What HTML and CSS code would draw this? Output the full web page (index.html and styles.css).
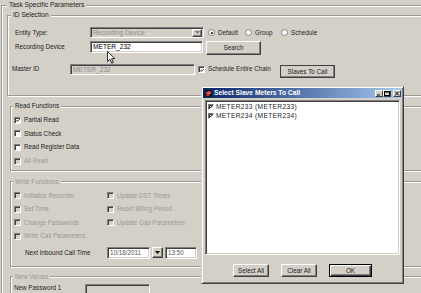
FILE: index.html
```html
<!DOCTYPE html>
<html>
<head>
<meta charset="utf-8">
<link rel="stylesheet" href="styles.css">
</head>
<body>
<div class="screen">
  <fieldset class="group outer">
    <legend class="lg-outer">Task Specific Parameters</legend>

    <fieldset class="group idsel">
      <legend class="lg-id">ID Selection</legend>
      <div class="idbody">
        <div class="row r1">
          <span class="lbl w75">Entity Type:</span>
          <div class="combo dis">
            <span class="combo-text">Recording Device</span>
            <span class="dropbtn"><svg width="5" height="3" viewBox="0 0 5 3"><path d="M0 0h5L2.5 3z" fill="#808080"/></svg></span>
          </div>
          <div class="radios">
            <span class="radio on w37"><i></i>Default</span>
            <span class="radio w36"><i></i>Group</span>
            <span class="radio"><i></i>Schedule</span>
          </div>
        </div>
        <div class="row r2">
          <span class="lbl w75 pt">Recording Device</span>
          <div class="input rd">METER_232</div>
          <button class="btn search">Search</button>
        </div>
        <div class="row r3">
          <span class="lbl w58 pt2">Master ID</span>
          <div class="input master dis">METER_232</div>
          <span class="cb on cb-chain"><svg width="5" height="5" viewBox="0 0 5 5"><path d="M0.5 2.2L1.8 3.6L4.5 0.8" fill="none" stroke="#000" stroke-width="1.1"/></svg></span>
          <span class="chain-text">Schedule Entire Chain</span>
          <button class="btn slaves">Slaves To Call</button>
        </div>
      </div>
    </fieldset>

    <fieldset class="group readf">
      <legend class="lg-small">Read Functions</legend>
      <div class="readbody">
        <div class="chk"><span class="cb on"><svg width="5" height="5" viewBox="0 0 5 5"><path d="M0.5 2.2L1.8 3.6L4.5 0.8" fill="none" stroke="#000" stroke-width="1.1"/></svg></span>Partial Read</div>
        <div class="chk"><span class="cb"></span>Status Check</div>
        <div class="chk"><span class="cb"></span>Read Register Data</div>
        <div class="chk dtext"><span class="cb dis"></span>All Read</div>
      </div>
    </fieldset>

    <fieldset class="group writef">
      <legend class="lg-small dtext">Write Functions</legend>
      <div class="writebody">
        <div class="wgrid">
          <div class="chk2 dtext"><span class="cb dis"></span>Initialize Recorder</div>
          <div class="chk2 dtext"><span class="cb dis"></span>Update DST Times</div>
          <div class="chk2 dtext"><span class="cb dis"></span>Set Time</div>
          <div class="chk2 dtext"><span class="cb dis"></span>Reset Billing Period</div>
          <div class="chk2 dtext"><span class="cb dis"></span>Change Passwords</div>
          <div class="chk2 dtext"><span class="cb dis"></span>Update Gas Parameters</div>
          <div class="chk2 dtext"><span class="cb dis"></span>Write Call Parameters</div>
        </div>
        <div class="row nextrow">
          <span class="lbl nextlbl">Next Inbound Call Time</span>
          <div class="input date">10/18/2011</div>
          <span class="dropbtn2"><svg width="5" height="3" viewBox="0 0 5 3"><path d="M0 0h5L2.5 3z" fill="#000"/></svg></span>
          <div class="input time">13:50</div>
        </div>
      </div>
    </fieldset>

    <fieldset class="group newv">
      <legend class="lg-small dtext">New Values</legend>
      <div class="newbody">
        <div class="row">
          <span class="lbl w71">New Password 1</span>
          <div class="input pw"></div>
        </div>
      </div>
    </fieldset>
  </fieldset>

  <div class="dialog">
    <div class="titlebar">
      <svg class="ticon" width="7" height="7" viewBox="0 0 7 7"><rect width="7" height="7" fill="#1a1a1a"/><path d="M1 6L3 1h3L4 6z" fill="#e0201c"/><path d="M1 3h5" stroke="#fff" stroke-width="0.6"/></svg>
      <span class="ttext">Select Slave Meters To Call</span>
      <span class="tbtns">
        <span class="tb"><svg width="6" height="5" viewBox="0 0 6 5"><path d="M1 4h3" stroke="#000" stroke-width="1"/></svg></span>
        <span class="tb"><svg width="6" height="5" viewBox="0 0 6 5"><rect x="0.5" y="0.5" width="5" height="4" fill="none" stroke="#000"/><path d="M0.5 1h5" stroke="#000"/></svg></span>
        <span class="tb close"><svg width="6" height="5" viewBox="0 0 6 5"><path d="M1 0.5l4 4M5 0.5l-4 4" stroke="#000" stroke-width="1"/></svg></span>
      </span>
    </div>
    <div class="list">
      <div class="item"><span class="cb small on"><svg width="4" height="4" viewBox="0 0 5 5"><path d="M0.5 2.2L1.8 3.6L4.5 0.8" fill="none" stroke="#000" stroke-width="1.2"/></svg></span>METER233 (METER233)</div>
      <div class="item"><span class="cb small on"><svg width="4" height="4" viewBox="0 0 5 5"><path d="M0.5 2.2L1.8 3.6L4.5 0.8" fill="none" stroke="#000" stroke-width="1.2"/></svg></span>METER234 (METER234)</div>
    </div>
    <div class="dbtns">
      <button class="btn dbtn">Select All</button>
      <button class="btn dbtn">Clear All</button>
      <button class="btn dbtn ok">OK</button>
    </div>
  </div>

  <svg class="cursor" width="9" height="13" viewBox="0 0 9 13"><path d="M0.5 0.5V10.5L3 8.2L4.8 12.2L6.3 11.5L4.6 7.6H7.8Z" fill="#fff" stroke="#000" stroke-width="0.8" stroke-linejoin="round"/></svg>
</div>
</body>
</html>
```

FILE: styles.css
```css
* { box-sizing: border-box; }
html, body { margin: 0; padding: 0; }
body {
  background: #d4d0c8;
  font-family: "Liberation Sans", Arial, sans-serif;
  font-size: 6.3px;
  line-height: 8px;
  color: #1c1c1c;
}
.screen {
  position: relative;
  width: 421px;
  height: 293px;
  overflow: hidden;
}

/* group boxes */
.group {
  border: 1px solid #9d9a93;
  box-shadow: inset 1px 1px 0 #fff, 1px 1px 0 #fff;
  padding: 0;
  margin: 0;
  min-width: 0;
}
.group > legend {
  padding: 0 2px;
  background: #d4d0c8;
  line-height: 8px;
}
.outer { margin: 1px 0 0 1px; width: 700px; height: 420px; }
.lg-outer { margin-left: 5px; font-size: 6.7px; }

.idsel { margin: 2px 0 0 5px; width: 680px; }
.lg-id { margin-left: 3px; font-size: 6.6px; }
.idbody { padding: 8px 0 18px 7px; }

.row { display: flex; align-items: flex-start; }
.r1 { height: 11px; align-items: center; }
.r2 { height: 14px; margin-top: 3px; }
.r3 { height: 13px; margin-top: 9px; margin-left: -3px; }

.lbl { flex: none; white-space: nowrap; }
.w75 { width: 75px; }
.w58 { width: 58px; }
.w71 { width: 71px; }
.pt { padding-top: 2px; }
.pt2 { padding-top: 1px; }

.input, .combo {
  flex: none;
  background: #fff;
  border: 1px solid;
  border-color: #808080 #fff #fff #808080;
  box-shadow: inset 1px 1px 0 #404040, inset -1px -1px 0 #d4d0c8;
  padding: 0 2px;
  white-space: nowrap;
  overflow: hidden;
  font-size: 6.6px;
}
.dis { background: #d4d0c8; color: #8f8d88; }
.combo {
  width: 114px;
  height: 11px;
  display: flex;
  align-items: center;
  justify-content: space-between;
  padding: 0 1px 0 2px;
  line-height: 8px;
}
.dropbtn, .dropbtn2 {
  flex: none;
  width: 10px;
  height: 8px;
  background: #d4d0c8;
  border: 1px solid;
  border-color: #fff #404040 #404040 #fff;
  box-shadow: inset -1px -1px 0 #808080;
  display: flex;
  align-items: center;
  justify-content: center;
}
.radios { display: flex; margin-left: 4px; align-items: center; }
.radio { display: flex; align-items: center; white-space: nowrap; }
.radio i {
  width: 7px; height: 7px; border-radius: 50%;
  background: #fff;
  border: 1px solid #808080;
  margin-right: 3px;
  flex: none;
  position: relative;
}
.radio.on i::after {
  content: "";
  position: absolute;
  left: 1.5px; top: 1.5px;
  width: 2px; height: 2px;
  border-radius: 50%;
  background: #000;
}
.w37 { width: 37px; }
.w36 { width: 36px; }

.input.rd { width: 113px; height: 12px; line-height: 10px; padding-left: 2px; color: #000; }
.btn {
  font-family: "Liberation Sans", Arial, sans-serif;
  font-size: 6.3px;
  line-height: 8px;
  color: #1c1c1c;
  background: #d4d0c8;
  border: 1px solid;
  border-color: #fff #404040 #404040 #fff;
  box-shadow: inset -1px -1px 0 #808080;
  padding: 0;
  margin: 0;
  flex: none;
}
.search { width: 55px; height: 14px; margin-left: 3px; }
.input.master { width: 125px; height: 11px; line-height: 9px; }
.cb {
  flex: none;
  width: 7px; height: 7px;
  background: #fff;
  border: 1px solid;
  border-color: #808080 #fff #fff #808080;
  box-shadow: inset 1px 1px 0 #404040;
  display: inline-flex;
  align-items: center;
  justify-content: center;
}
.cb svg { display: block; margin: 1px 0 0 1px; }
.cb.dis { background: #d4d0c8; }
.cb-chain { margin: 2px 0 0 3px; }
.chain-text { margin: 1px 0 0 3px; width: 72px; white-space: nowrap; }
.slaves { width: 55px; height: 13px; margin-top: 1px; border-color: #404040; }

/* read functions */
.readf { margin: 6px 0 0 8px; width: 660px; }
.lg-small { margin-left: 2px; }
.readbody { padding: 3.5px 0 2px 3px; }
.chk { height: 13.6px; display: flex; align-items: center; white-space: nowrap; }
.chk .cb { margin-right: 3px; }
.dtext { color: #9a9893; }

/* write functions */
.writef { margin: 7px 0 0 8px; width: 660px; }
.writebody { padding: 3.25px 0 7px 3px; }
.wgrid { display: grid; grid-template-columns: 93px 100px; grid-auto-rows: 13.5px; }
.chk2 { display: flex; align-items: center; white-space: nowrap; }
.chk2 .cb { margin-right: 3px; }
.nextrow { height: 12px; margin-top: 3.75px; align-items: center; }
.nextlbl { margin-left: 11px; width: 82px; }
.input.date { width: 43px; height: 12px; line-height: 10px; color: #555; font-size: 6.3px; }
.dropbtn2 { width: 11px; height: 11px; margin-left: 2px; }
.input.time { width: 32px; height: 12px; line-height: 10px; margin-left: 2px; color: #555; font-size: 6.3px; }

/* new values */
.newv { margin: 6px 0 0 8px; width: 660px; height: 60px; }
.newbody { padding: 3px 0 0 3px; }
.input.pw { width: 65px; height: 14px; background: #d4d0c8; }

/* dialog */
.dialog {
  position: absolute;
  left: 201px;
  top: 86px;
  width: 203px;
  height: 198px;
  background: #d4d0c8;
  border: 1px solid;
  border-color: #d4d0c8 #404040 #404040 #d4d0c8;
  box-shadow: inset 1px 1px 0 #fff, inset -1px -1px 0 #808080;
  padding: 1px;
  display: flex;
  flex-direction: column;
}
.titlebar {
  height: 10px;
  background: linear-gradient(to right, #0a246a, #a6caf0);
  display: flex;
  align-items: center;
  padding-left: 2px;
  flex: none;
}
.ticon { flex: none; display: block; }
.ttext {
  margin-left: 2px;
  color: #fff;
  font-weight: bold;
  font-size: 6.7px;
  white-space: nowrap;
  flex: 1;
}
.tbtns { display: flex; margin-right: 1px; }
.tb {
  width: 8px; height: 7px;
  background: #d4d0c8;
  border: 1px solid;
  border-color: #fff #404040 #404040 #fff;
  display: flex; align-items: center; justify-content: center;
}
.tb svg { display: block; }
.tb.close { margin-left: 2px; }
.list {
  margin: 2px 2px 0 2px;
  height: 155px;
  background: #fff;
  border: 1px solid;
  border-color: #808080 #fff #fff #808080;
  box-shadow: inset 1px 1px 0 #404040, inset -1px -1px 0 #d4d0c8;
  padding: 1px 0 0 2px;
  flex: none;
}
.item { height: 9px; display: flex; align-items: center; white-space: nowrap; font-size: 6.6px; letter-spacing: 0.35px; }
.cb.small { width: 6px; height: 6px; margin-right: 2px; }
.cb.small svg { margin: 0; }
.dbtns { display: flex; justify-content: center; gap: 12px; margin-top: 9px; }
.dbtn { width: 36px; height: 13px; }
.dbtn.ok {
  width: 43px;
  border: 1px solid #000;
  box-shadow: inset 1px 1px 0 #fff, inset -1px -1px 0 #404040, inset -2px -2px 0 #808080;
}

.cursor { position: absolute; left: 107px; top: 51px; }
```
